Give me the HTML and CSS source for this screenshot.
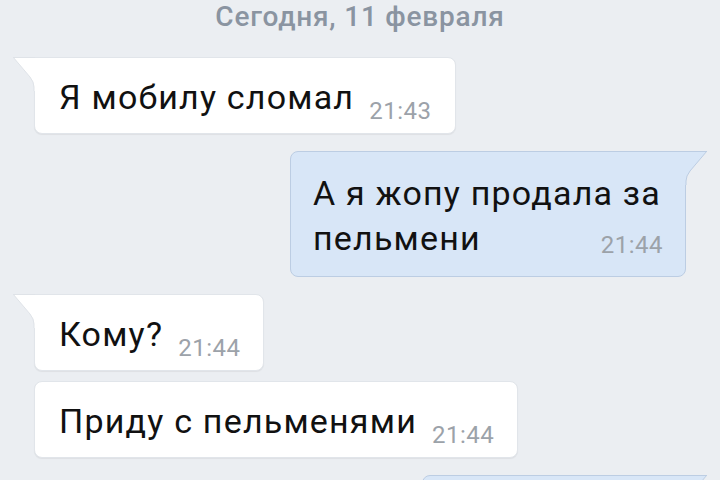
FILE: index.html
```html
<!DOCTYPE html>
<html lang="ru">
<head>
    <meta charset="UTF-8">
    <meta name="viewport" content="width=device-width, initial-scale=1.0">
    <title>Сообщения</title>
    <link rel="stylesheet" href="styles.css">
</head>
<body>
    <div class="chat">
        <div class="day">Сегодня, 11 февраля</div>

        <div class="msg msg-in">
            <svg class="tail tail-in" width="22" height="34" viewBox="0 0 22 34">
                <path d="M0.5 0.5 H22 V34 H21 V30 Q21 25 17 20 Z" fill="#fff"/>
                <path d="M0 0.5 H22 M0.7 0.8 L17 20 Q21 25 21 30 V34" fill="none" stroke="#dfe3e8"/>
            </svg>
            <span class="text">Я мобилу сломал</span><span class="time">21:43</span>
        </div>

        <div class="msg msg-out">
            <svg class="tail tail-out" width="22" height="34" viewBox="0 0 22 34">
                <path d="M21.5 0.5 H0 V34 H1 V30 Q1 25 5 20 Z" fill="#d8e6f7"/>
                <path d="M22 0.5 H0 M21.3 0.8 L5 20 Q1 25 1 30 V34" fill="none" stroke="#bccde3"/>
            </svg>
            <span class="text">А я жопу продала за </span><span class="text">пельмени</span><span class="time time-end">21:44</span>
        </div>

        <div class="msg msg-in">
            <svg class="tail tail-in" width="22" height="34" viewBox="0 0 22 34">
                <path d="M0.5 0.5 H22 V34 H21 V30 Q21 25 17 20 Z" fill="#fff"/>
                <path d="M0 0.5 H22 M0.7 0.8 L17 20 Q21 25 21 30 V34" fill="none" stroke="#dfe3e8"/>
            </svg>
            <span class="text">Кому?</span><span class="time">21:44</span>
        </div>

        <div class="msg msg-in msg-next">
            <span class="text">Приду с пельменями</span><span class="time">21:44</span>
        </div>

        <div class="msg msg-out msg-last">
            <svg class="tail tail-out" width="22" height="34" viewBox="0 0 22 34">
                <path d="M21.5 0.5 H0 V34 H1 V30 Q1 25 5 20 Z" fill="#d8e6f7"/>
                <path d="M22 0.5 H0 M21.3 0.8 L5 20 Q1 25 1 30 V34" fill="none" stroke="#bccde3"/>
            </svg>
        </div>
    </div>
</body>
</html>
```

FILE: styles.css
```css
html, body {
    height: 100%;
    overflow: hidden;
}

body {
    margin: 0;
    background-color: #ebeef2;
    font-family: Roboto, "Noto Sans", sans-serif;
}

.chat {
    display: flex;
    flex-direction: column;
    padding: 0 34px;
}

.day {
    text-align: center;
    font-size: 28px;
    font-weight: 500;
    letter-spacing: 0.8px;
    line-height: 33px;
    color: #8a94a1;
    margin-bottom: 24px;
}

.msg {
    position: relative;
    font-size: 34px;
    letter-spacing: 1.2px;
    line-height: 45px;
    color: #111;
    border-radius: 8px;
    margin-top: 17px;
}

.msg-in {
    align-self: flex-start;
    background-color: #fff;
    border: 1px solid #e1e5ea;
    box-shadow: 0 1px 1px rgba(0, 0, 0, 0.06);
    padding: 17px 23px 11px 24px;
    border-top-left-radius: 0;
}

.day + .msg {
    margin-top: 0;
}

.msg-next {
    margin-top: 10px;
    border-top-left-radius: 8px;
}

.msg-out {
    align-self: flex-end;
    width: 350px;
    background-color: #d8e6f7;
    border: 1px solid #bccde3;
    padding: 19px 22px 15px 22px;
    border-top-right-radius: 0;
}

.msg-last {
    width: 218px;
    height: 60px;
    margin-top: 17px;
}

.tail {
    position: absolute;
    top: -1px;
}

.tail-in {
    left: -22px;
}

.tail-out {
    right: -22px;
}

.time {
    display: inline-block;
    font-size: 24px;
    letter-spacing: 0.5px;
    line-height: 22px;
    color: #9ca2a9;
    margin-left: 15px;
    vertical-align: -10px;
}

.time-end {
    float: right;
    vertical-align: baseline;
    margin-top: 18px;
}
```
